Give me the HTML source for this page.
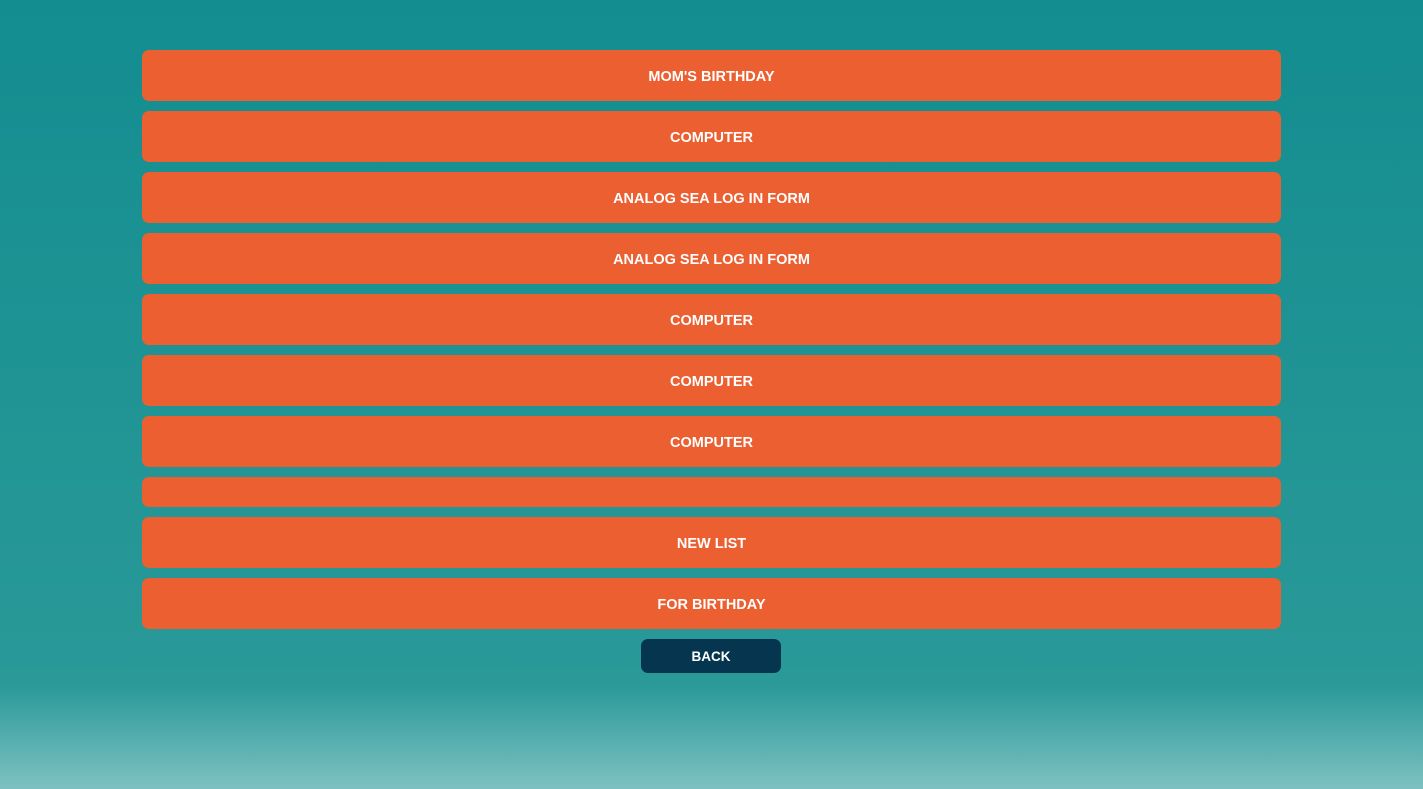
<!DOCTYPE html>
<html><head><style>
html,body{margin:0;padding:0;}
body{width:1423px;height:789px;overflow:hidden;position:relative;
background:linear-gradient(to bottom,#138d90 0px,#2a9998 685px,#7ec1c2 789px);
font-family:"Segoe UI","Liberation Sans",sans-serif;}
.b{position:absolute;left:142px;width:1139px;height:51px;box-sizing:border-box;padding-top:2px;background:#eb5f31;border-radius:7px;
color:#fff;font-weight:bold;font-size:14.5px;display:flex;align-items:center;justify-content:center;}
.back{position:absolute;left:641px;top:639px;width:140px;height:34px;background:#06364f;border-radius:7px;
color:#fff;font-weight:bold;font-size:13.5px;display:flex;align-items:center;justify-content:center;}
</style></head><body>
<div class="b" style="top:50px">MOM'S BIRTHDAY</div>
<div class="b" style="top:111px">COMPUTER</div>
<div class="b" style="top:172px">ANALOG SEA LOG IN FORM</div>
<div class="b" style="top:233px">ANALOG SEA LOG IN FORM</div>
<div class="b" style="top:294px">COMPUTER</div>
<div class="b" style="top:355px">COMPUTER</div>
<div class="b" style="top:416px">COMPUTER</div>
<div class="b" style="top:477px;height:30px"></div>
<div class="b" style="top:517px">NEW LIST</div>
<div class="b" style="top:578px">FOR BIRTHDAY</div>
<div class="back">BACK</div>
</body></html>
